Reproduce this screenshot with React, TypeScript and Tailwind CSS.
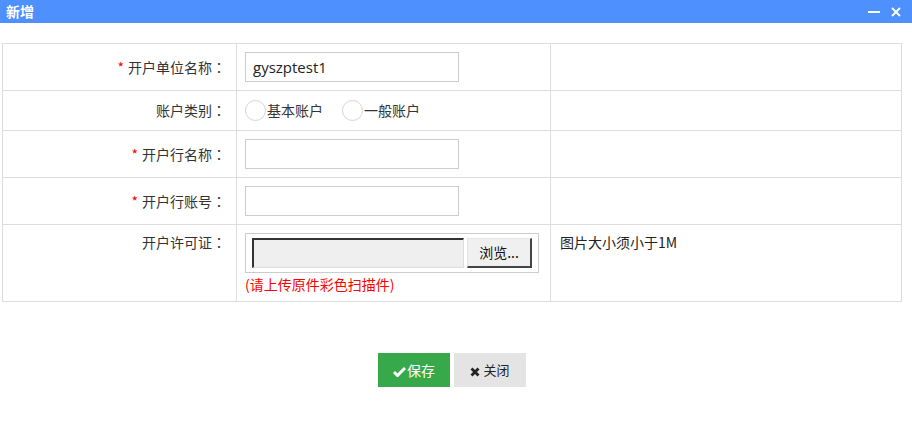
import React from "react";

const font = { fontFamily: '"Noto Sans CJK SC", "Noto Sans", sans-serif' };

function Label({ text, req }: { text: string; req?: boolean }) {
  return (
    <span>
      {req && <span className="text-[#f00] mr-[4px]">*</span>}
      {text}
      <span style={{ fontFamily: '"Noto Sans CJK TC", sans-serif' }}>：</span>
    </span>
  );
}

function Radio({ label }: { label: string }) {
  return (
    <span className="inline-flex items-center mr-[19px]">
      <span className="inline-block w-[21px] h-[21px] rounded-full border border-[#d5d5d5] bg-white"></span>
      <span className="ml-[1px]">{label}</span>
    </span>
  );
}

export default function App() {
  return (
    <div className="w-[912px] h-[437px] bg-white text-[14px] text-[#333]" style={font}>
      <div className="h-[23px] bg-[#4d90fe] flex items-center justify-between pl-[6px] pr-[11px]">
        <span className="text-white font-bold text-[14px]">新增</span>
        <div className="flex items-center gap-[11px] text-white">
          <span className="block w-[12px] h-[2px] bg-white"></span>
          <svg width="10" height="10" viewBox="0 0 10 10">
            <path d="M1 1 L9 9 M9 1 L1 9" stroke="white" strokeWidth="1.8" />
          </svg>
        </div>
      </div>
      <div className="pt-[20px] pl-[2px]">
        <table className="border-collapse table-fixed w-[900px]">
          <colgroup>
            <col className="w-[234px]" />
            <col className="w-[314px]" />
            <col />
          </colgroup>
          <tbody>
            <tr className="h-[47px]">
              <td className="border border-[#ddd] text-right pr-[10px] align-middle text-[#333]">
                <Label text="开户单位名称" req />
              </td>
              <td className="border border-[#ddd] pl-[8px] align-middle">
                <div className="w-[214px] h-[30px] border border-[#ccc] flex items-center pl-[7px] text-[15px] text-[#222]" style={{ fontFamily: '"Open Sans", "Noto Sans", sans-serif' }}>
                  gyszptest1
                </div>
              </td>
              <td className="border border-[#ddd]"></td>
            </tr>
            <tr className="h-[40px]">
              <td className="border border-[#ddd] text-right pr-[10px] align-middle">
                <Label text="账户类别" />
              </td>
              <td className="border border-[#ddd] pl-[8px] align-middle">
                <div className="flex items-center">
                  <Radio label="基本账户" />
                  <Radio label="一般账户" />
                </div>
              </td>
              <td className="border border-[#ddd]"></td>
            </tr>
            <tr className="h-[47px]">
              <td className="border border-[#ddd] text-right pr-[10px] align-middle">
                <Label text="开户行名称" req />
              </td>
              <td className="border border-[#ddd] pl-[8px] align-middle">
                <div className="w-[214px] h-[30px] border border-[#ccc]"></div>
              </td>
              <td className="border border-[#ddd]"></td>
            </tr>
            <tr className="h-[47px]">
              <td className="border border-[#ddd] text-right pr-[10px] align-middle">
                <Label text="开户行账号" req />
              </td>
              <td className="border border-[#ddd] pl-[8px] align-middle">
                <div className="w-[214px] h-[30px] border border-[#ccc]"></div>
              </td>
              <td className="border border-[#ddd]"></td>
            </tr>
            <tr className="h-[77px]">
              <td className="border border-[#ddd] text-right pr-[10px] align-top pt-[7px]">
                <Label text="开户许可证" />
              </td>
              <td className="border border-[#ddd] pl-[8px] align-top pt-[8px]">
                <div className="w-[294px] h-[40px] border border-[#ccc] flex items-center pl-[6px] gap-[3px]">
                  <div className="w-[212px] h-[30px] bg-[#efefef] border-t-2 border-l-2 border-t-[#333] border-l-[#333] border-b border-r border-b-[#ddd] border-r-[#ddd]"></div>
                  <div className="w-[65px] h-[30px] bg-[#f0f0f0] border-b-2 border-r-2 border-b-[#444] border-r-[#444] border-t border-l border-t-[#e5e5e5] border-l-[#e5e5e5] flex items-center justify-center text-[#111]">
                    浏览...
                  </div>
                </div>
                <div className="text-[#f00] mt-[1px] leading-[20px]">(请上传原件彩色扫描件)</div>
              </td>
              <td className="border border-[#ddd] align-top pt-[7px] pl-[9px] text-[#222]">图片大小须小于1M</td>
            </tr>
          </tbody>
        </table>
        <div className="w-[900px] flex justify-center gap-[4px] mt-[51px]">
          <div className="w-[72px] h-[34px] bg-[#37a94a] text-white flex items-center justify-center text-[14px]">
            <svg width="13" height="11" viewBox="0 0 13 11" className="mr-[1px] mt-[3px]">
              <path d="M1 6 L4.5 9.5 L12 2" stroke="white" strokeWidth="3" fill="none" />
            </svg>
            保存
          </div>
          <div className="w-[72px] h-[34px] bg-[#e4e4e4] text-[#222] flex items-center justify-center text-[13px]">
            <svg width="10" height="10" viewBox="0 0 10 10" className="mr-[3px] mt-[3px]">
              <path d="M1.5 1.5 L8.5 8.5 M8.5 1.5 L1.5 8.5" stroke="#222" strokeWidth="2.8" />
            </svg>
            关闭
          </div>
        </div>
      </div>
    </div>
  );
}
